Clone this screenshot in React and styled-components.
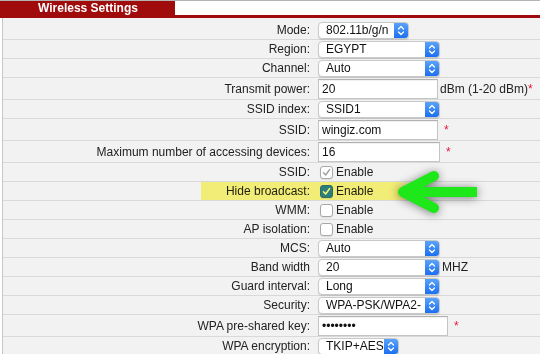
import React from "react";
import styled, { createGlobalStyle } from "styled-components";

const GlobalStyle = createGlobalStyle`
  html, body {
    margin: 0;
    padding: 0;
    background: #fff;
  }
  body {
    font-family: "Liberation Sans", Arial, sans-serif;
    font-size: 12px;
    color: #222;
    overflow: hidden;
  }
`;

const Page = styled.div`
  position: relative;
  width: 540px;
  height: 354px;
  overflow: hidden;
  border-top: 1px solid #b4b4b4;
  box-sizing: border-box;
`;

const TabBar = styled.div`
  display: flex;
  height: 14px;
  border-bottom: 3px solid #a00c0c;
`;

const Tab = styled.div`
  width: 175px;
  padding-left: 38px;
  box-sizing: border-box;
  background: #a00c0c;
  color: #fff;
  font-weight: bold;
  font-size: 12px;
  line-height: 14px;
`;

const Table = styled.div`
  margin-left: 2px;
  padding-top: 3px;
  border-left: 1px solid #c8c8c8;
  background: #f2f2f2;
`;

const Row = styled.div`
  position: relative;
  display: grid;
  grid-template-columns: 311px 1fr;
  align-items: center;
  min-height: ${(p) => (p.$tall ? 21 : 18)}px;
  border-bottom: 1px solid #d9d9d9;
`;

const Label = styled.div`
  text-align: right;
  padding-right: 4px;
  white-space: nowrap;
`;

const Value = styled.div`
  display: flex;
  align-items: center;
  padding-left: 4px;
  white-space: nowrap;
`;

const Highlight = styled.div`
  position: absolute;
  left: 198px;
  width: 214px;
  top: 0;
  bottom: 0;
  background: linear-gradient(to right, #fffa7c 0, #fffa7c 92%, rgba(255, 250, 124, 0) 100%);
  mix-blend-mode: multiply;
  pointer-events: none;
`;

const SelectBox = styled.div`
  display: flex;
  align-items: stretch;
  width: ${(p) => p.$width}px;
  height: 17px;
  box-sizing: border-box;
  background: #fff;
  border: 1px solid #c9c9c9;
  border-radius: 4px;
  box-shadow: 0 1px 1px rgba(0, 0, 0, 0.12);
  overflow: hidden;
`;

const SelectText = styled.span`
  flex: 1;
  padding-left: 7px;
  line-height: 15px;
  color: #111;
`;

const Stepper = styled.span`
  width: 14px;
  display: flex;
  align-items: center;
  justify-content: center;
  background: linear-gradient(#5aa3fb, #1c6ff1);
`;

const TextInput = styled.input`
  width: ${(p) => p.$width}px;
  height: 20px;
  box-sizing: border-box;
  margin: 0;
  padding: 0 3px;
  border: 1px solid #c4c4c4;
  border-top-color: #b0b0b0;
  box-shadow: inset 0 1px 1px rgba(0, 0, 0, 0.06);
  background: #fff;
  font-family: "Liberation Sans", Arial, sans-serif;
  font-size: 12px;
  color: #111;
  outline: none;
`;

const Unit = styled.span`
  margin-left: 2px;
`;

const Star = styled.span`
  color: #e2183c;
  margin-left: ${(p) => p.$gap || 0}px;
`;

const CheckLabel = styled.span`
  display: flex;
  align-items: center;
  gap: 3px;
  padding-left: 2px;
`;

const Box = styled.span`
  width: 13px;
  height: 13px;
  box-sizing: border-box;
  border-radius: 3px;
  display: flex;
  align-items: center;
  justify-content: center;
  background: ${(p) => (p.$on ? "#2d7ff9" : "#fff")};
  border: 1px solid ${(p) => (p.$on ? "#2a6fd8" : "#a8a8a8")};
  box-shadow: 0 1px 1px rgba(0, 0, 0, 0.08);
`;

const Arrow = styled.svg`
  position: absolute;
  left: 392px;
  top: 165px;
  overflow: visible;
  filter: drop-shadow(0 1px 5px rgba(0, 0, 0, 0.5));
`;

const Chevrons = () => (
  <svg width="8" height="11" viewBox="0 0 8 11">
    <path d="M1.5 4 L4 1.5 L6.5 4 M1.5 7 L4 9.5 L6.5 7" fill="none" stroke="#fff" strokeWidth="1.3" strokeLinecap="round" strokeLinejoin="round" />
  </svg>
);

const Select = ({ value, width }) => (
  <SelectBox $width={width}>
    <SelectText>{value}</SelectText>
    <Stepper>
      <Chevrons />
    </Stepper>
  </SelectBox>
);

const Check = ({ state }) => (
  <CheckLabel>
    <Box $on={state === "on"}>
      {state !== "off" && (
        <svg width="9" height="9" viewBox="0 0 9 9">
          <path d="M1.5 4.8 L3.6 7 L7.6 1.6" fill="none" stroke={state === "on" ? "#fff" : "#a0a0a0"} strokeWidth="1.5" strokeLinecap="round" strokeLinejoin="round" />
        </svg>
      )}
    </Box>
    Enable
  </CheckLabel>
);

const rows = [
  { label: "Mode:", kind: "select", value: "802.11b/g/n", width: 91 },
  { label: "Region:", kind: "select", value: "EGYPT", width: 122 },
  { label: "Channel:", kind: "select", value: "Auto", width: 122 },
  { label: "Transmit power:", kind: "input", value: "20", width: 120, unit: "dBm (1-20 dBm)", star: 0 },
  { label: "SSID index:", kind: "select", value: "SSID1", width: 122 },
  { label: "SSID:", kind: "input", value: "wingiz.com", width: 120, star: 6 },
  { label: "Maximum number of accessing devices:", kind: "input", value: "16", width: 122, star: 6 },
  { label: "SSID:", kind: "check", state: "dim" },
  { label: "Hide broadcast:", kind: "check", state: "on", highlight: true },
  { label: "WMM:", kind: "check", state: "off" },
  { label: "AP isolation:", kind: "check", state: "off" },
  { label: "MCS:", kind: "select", value: "Auto", width: 122 },
  { label: "Band width", kind: "select", value: "20", width: 122, unit: "MHZ" },
  { label: "Guard interval:", kind: "select", value: "Long", width: 122 },
  { label: "Security:", kind: "select", value: "WPA-PSK/WPA2-", width: 122 },
  { label: "WPA pre-shared key:", kind: "password", value: "12345678", width: 130, star: 6 },
  { label: "WPA encryption:", kind: "select", value: "TKIP+AES", width: 81 },
];

const Field = ({ row }) => {
  if (row.kind === "check") return <Check state={row.state} />;
  return (
    <>
      {row.kind === "select" ? (
        <Select value={row.value} width={row.width} />
      ) : (
        <TextInput
          type={row.kind === "password" ? "password" : "text"}
          $width={row.width}
          defaultValue={row.value}
          readOnly
        />
      )}
      {row.unit && <Unit>{row.unit}</Unit>}
      {row.star !== undefined && <Star $gap={row.star}>*</Star>}
    </>
  );
};

export default function App() {
  return (
    <>
      <GlobalStyle />
      <Page>
        <TabBar>
          <Tab>Wireless Settings</Tab>
        </TabBar>
        <Table>
          {rows.map((row, i) => (
            <Row key={i} $tall={row.kind === "input" || row.kind === "password"}>
              <Label>{row.label}</Label>
              <Value>
                <Field row={row} />
              </Value>
              {row.highlight && <Highlight />}
            </Row>
          ))}
        </Table>
        <Arrow width="92" height="50" viewBox="0 0 92 50">
          <line x1="85" y1="26" x2="16" y2="26" stroke="#1ee81a" strokeWidth="10" />
          <polyline points="42,10 11,26 42,42" fill="none" stroke="#1ee81a" strokeWidth="10" strokeLinecap="round" strokeLinejoin="round" />
        </Arrow>
      </Page>
    </>
  );
}
